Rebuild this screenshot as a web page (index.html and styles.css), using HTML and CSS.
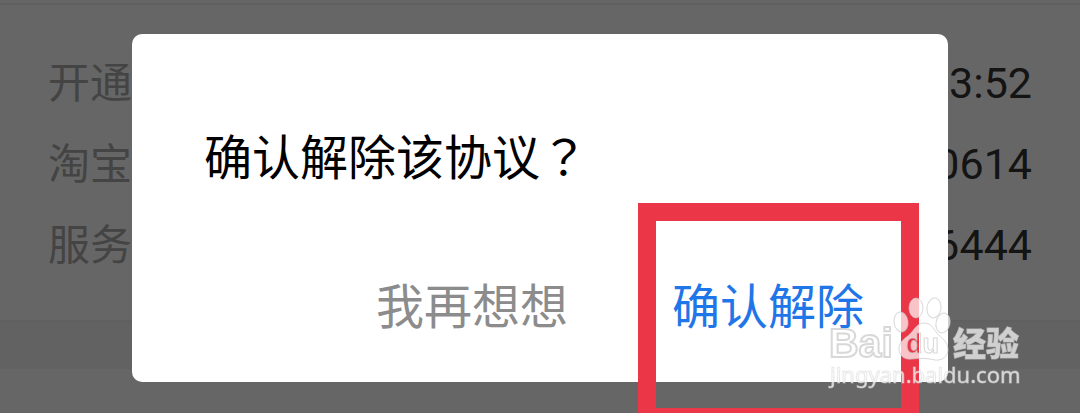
FILE: index.html
```html
<!DOCTYPE html>
<html lang="zh-CN">
<head>
  <meta charset="UTF-8">
  <meta name="viewport" content="width=device-width, initial-scale=1.0">
  <title>确认解除该协议？</title>
  <link rel="stylesheet" href="styles.css">
</head>
<body>
  <!-- Agreement details -->
  <main class="page">
    <dl class="details">
      <div class="row">
        <dt>开通</dt>
        <dd>3:52</dd>
      </div>
      <div class="row">
        <dt>淘宝</dt>
        <dd>0614</dd>
      </div>
      <div class="row">
        <dt>服务</dt>
        <dd>6444</dd>
      </div>
    </dl>
    <div class="band"></div>
  </main>

  <!-- Confirm dialog -->
  <div class="overlay">
    <div class="dialog" role="dialog" aria-modal="true" aria-labelledby="dialogTitle">
      <h1 class="dialog-title" id="dialogTitle">确认解除该协议<span class="mark" lang="zh-TW">？</span></h1>
      <div class="dialog-actions">
        <button type="button" class="btn btn-cancel">我再想想</button>
        <button type="button" class="btn btn-confirm">确认解除</button>
      </div>
    </div>
  </div>

  <!-- Watermark -->
  <svg class="watermark" width="210" height="104" viewBox="0 0 210 104">
    <mask id="duMask" maskUnits="userSpaceOnUse" x="0" y="0" width="210" height="104">
      <rect width="210" height="104" fill="#fff"/>
      <text class="wm-du" x="86" y="63">du</text>
    </mask>
    <g class="wm-shape">
      <text class="wm-bai" x="9" y="67">Bai</text>
      <ellipse cx="81" cy="32" rx="7" ry="10" transform="rotate(-8 81 32)"/>
      <ellipse cx="96" cy="18" rx="7" ry="10"/>
      <ellipse cx="114" cy="18" rx="7" ry="10" transform="rotate(8 114 18)"/>
      <ellipse cx="123" cy="33" rx="7" ry="10" transform="rotate(12 123 33)"/>
      <path mask="url(#duMask)" d="M104 33C97 33 95 39 90 44C85 49 79 51 79 59C79 66 85 70 92 69C100 68 107 68 115 70C122 71 128 66 128 60C128 51 121 48 117 43C113 38 111 33 104 33Z"/>
      <text class="wm-cn" x="133" y="66">经验</text>
    </g>
    <text class="wm-du-line" x="86" y="63">du</text>
    <text class="wm-url" x="10" y="93">jingyan.baidu.com</text>
  </svg>
</body>
</html>
```
FILE: styles.css
```css
* {
  box-sizing: border-box;
}

body {
  margin: 0;
  background-color: #ffffff;
  font-family: Roboto, "Noto Sans CJK SC", sans-serif;
  overflow: hidden;
}

/* Agreement details */
.page {
  padding-top: 3px;
}

.details {
  margin: 0;
  padding: 38px 48px 34px;
  border-top: 2px solid #f0f0f0;
  border-bottom: 2px solid #f0f0f0;
}

.row {
  display: flex;
  justify-content: space-between;
  line-height: 81px;
}

.row dt {
  font-size: 42px;
  color: #aaaaaa;
}

.row dd {
  margin: 0;
  font-size: 43px;
  color: #333333;
}

.band {
  height: 47px;
  background-color: #f5f5f5;
}

/* Confirm dialog */
.overlay {
  position: fixed;
  inset: 0;
  padding: 34px 132px;
  background-color: rgba(0, 0, 0, 0.6);
  overflow: hidden;
}

.dialog {
  padding: 92px 84px 51px 72px;
  border-radius: 10px;
  background-color: #ffffff;
  font-family: "Noto Sans CJK SC", sans-serif;
}

.dialog-title {
  margin: 0 0 93px;
  font-size: 48px;
  font-weight: 400;
  line-height: 56px;
  color: #000000;
}

/* the TC face centres the full-width question mark */
.mark {
  font-family: "Noto Sans CJK TC", sans-serif;
}

.dialog-actions {
  display: flex;
  justify-content: flex-end;
  gap: 104px;
}

.btn {
  padding: 0;
  border: none;
  background: none;
  font-family: inherit;
  font-size: 48px;
  line-height: 56px;
  cursor: pointer;
}

.btn-cancel {
  color: #8c8c8c;
}

.btn-confirm {
  position: relative;
  color: #1f76e8;
}

/* red frame round the confirm button */
.btn-confirm::after {
  content: "";
  position: absolute;
  top: -72px;
  right: -55px;
  bottom: -95px;
  left: -34px;
  border: 18px solid #eb3648;
}

/* Watermark */
.watermark {
  position: fixed;
  right: 50px;
  bottom: 19px;
  pointer-events: none;
}

.wm-shape {
  fill: rgba(255, 255, 255, 0.7);
  stroke: rgba(200, 200, 200, 0.7);
  stroke-width: 1px;
}

.wm-bai {
  font: bold 41px "Liberation Sans", sans-serif;
  stroke-width: 2px;
}

.wm-cn {
  font: 900 33px "Noto Sans CJK SC", sans-serif;
}

.wm-du,
.wm-du-line {
  font: bold 27px "Liberation Sans", sans-serif;
}

.wm-du-line {
  fill: none;
  stroke: rgba(200, 200, 200, 0.7);
}

.wm-url {
  font: 22px "Noto Sans", sans-serif;
  fill: rgba(255, 255, 255, 0.75);
  stroke: rgba(210, 210, 210, 0.5);
}
```
